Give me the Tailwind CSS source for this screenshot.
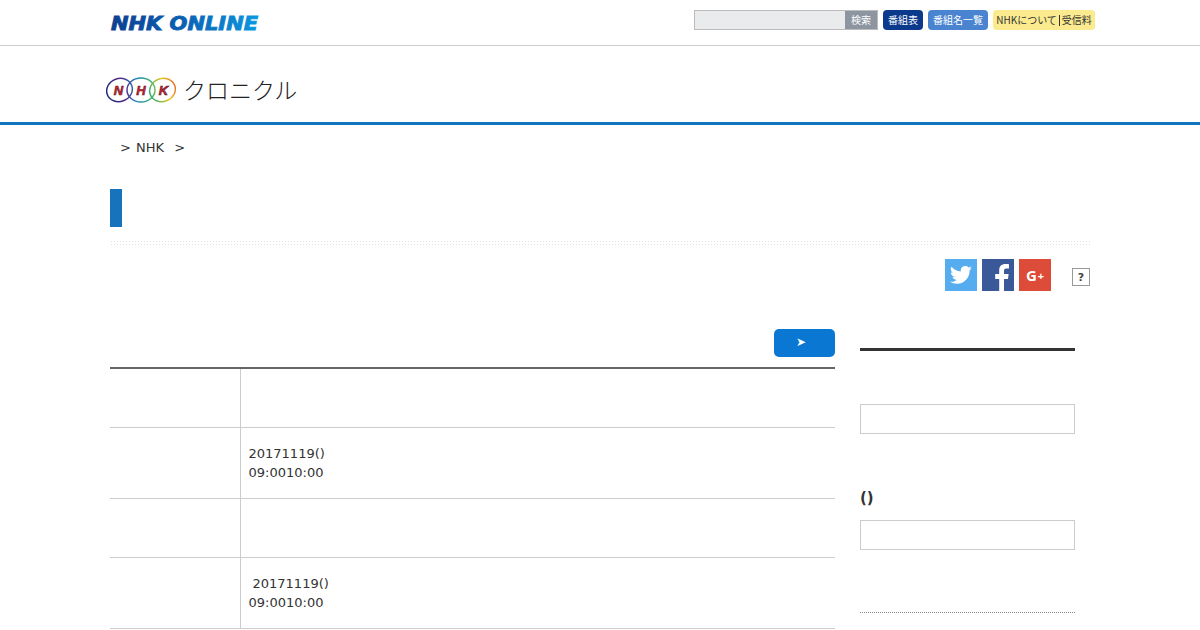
<!DOCTYPE html>
<html lang="ja">
<head>
  <meta charset="utf-8"/>
  <title>NHKクロニクル</title>
  <script src="https://cdn.jsdelivr.net/npm/@tailwindcss/browser@4"></script>
</head>
<body class="bg-white text-[#333] text-[13px] antialiased overflow-hidden h-[630px] font-['DejaVu_Sans',sans-serif]">
  <!-- top bar -->
  <header class="h-[46px] border-b border-[#ccc]">
    <div class="w-[985px] ml-[110px] h-[45px] flex items-center justify-between">
      <a class="block" href="#">
        <svg width="150" height="20" viewBox="0 0 150 20" class="block">
          <defs>
            <linearGradient id="online" x1="0" y1="0" x2="150" y2="0" gradientUnits="userSpaceOnUse">
              <stop offset="0" stop-color="#0b3f91"/>
              <stop offset="0.5" stop-color="#0b62b4"/>
              <stop offset="1" stop-color="#0a9ae0"/>
            </linearGradient>
          </defs>
          <text x="1" y="17" textLength="147" lengthAdjust="spacingAndGlyphs" font-family="DejaVu Sans" font-size="19" font-weight="700" font-style="italic" fill="url(#online)" stroke="url(#online)" stroke-width="0.9">NHK ONLINE</text>
        </svg>
      </a>
      <div class="flex items-center font-['Noto_Sans_CJK_JP',sans-serif] text-[10px] mt-[-5px]">
        <div class="flex w-[184px] h-[20px] border border-[#bbb] bg-[#e9ebed]">
          <div class="flex-1"></div>
          <div class="w-[32px] bg-[#8c95a0] text-white leading-[18px] text-center">検索</div>
        </div>
        <a class="ml-[5px] w-[40px] h-[20px] rounded-[4px] bg-[#0b3a8c] text-white leading-[20px] text-center" href="#">番組表</a>
        <a class="ml-[5px] w-[60px] h-[20px] rounded-[4px] bg-[#4a84d0] text-white leading-[20px] text-center" href="#">番組名一覧</a>
        <a class="ml-[5px] w-[102px] h-[20px] rounded-[4px] bg-[#fbeb8e] text-[#333] leading-[20px] flex items-center justify-center whitespace-nowrap" href="#">NHKについて<span class="w-px h-[11px] mx-[2px] bg-[#333]"></span>受信料</a>
      </div>
    </div>
  </header>

  <!-- chronicle logo -->
  <div class="h-[79px] border-b-[3px] border-[#0f75bd]">
    <div class="ml-[106px] h-[76px] pt-[12px] flex items-center gap-[7px]">
      <svg width="70" height="28" viewBox="0 0 70 28">
        <defs>
          <linearGradient id="ring" x1="0" y1="0" x2="70" y2="0" gradientUnits="userSpaceOnUse">
            <stop offset="0" stop-color="#1c2a78"/>
            <stop offset="0.28" stop-color="#5a2b8a"/>
            <stop offset="0.42" stop-color="#1a7fc0"/>
            <stop offset="0.62" stop-color="#2fae70"/>
            <stop offset="0.85" stop-color="#e9c81c"/>
            <stop offset="1" stop-color="#e8762a"/>
          </linearGradient>
        </defs>
        <g fill="none" stroke="url(#ring)" stroke-width="1.5">
          <ellipse cx="13.500" cy="14" rx="13" ry="11.500" transform="rotate(-20 13.500 14)"/>
          <ellipse cx="35" cy="14" rx="14" ry="12"/>
          <ellipse cx="56.500" cy="14" rx="13" ry="11.500" transform="rotate(-20 56.500 14)"/>
        </g>
        <g text-anchor="middle" font-family="Liberation Sans" font-size="13" font-weight="700" font-style="italic" fill="#d8252f" stroke="#5a1a28" stroke-width="0.6">
          <text x="12.500" y="18.500">N</text>
          <text x="35" y="18.500">H</text>
          <text x="57.500" y="18.500">K</text>
        </g>
      </svg>
      <span class="text-[23px] leading-none mt-[-2px] text-[#222] font-light font-['Noto_Sans_CJK_JP',sans-serif]">クロニクル</span>
    </div>
  </div>

  <!-- breadcrumb -->
  <div class="ml-[120px] mt-[13px] h-[19px] leading-[19px] whitespace-pre">&gt; <span class="pl-[1px]">NHK</span>  <span class="pl-[2px]">&gt;</span></div>

  <!-- page title -->
  <div class="ml-[110px] mt-[32px] w-[980px]">
    <div class="w-[12px] h-[38px] bg-[#1673bc]"></div>
    <div class="mt-[13px] h-[6px] bg-[radial-gradient(#e2e2e2_0.8px,transparent_0.8px)] bg-[length:3px_3px]"></div>
  </div>

  <!-- share -->
  <div class="w-[980px] ml-[110px] mt-[13px] h-[32px] flex items-center justify-end">
    <a class="w-[32px] h-[32px] bg-[#55acee] flex items-center justify-center" href="#">
      <svg width="24" height="24" viewBox="0 0 24 24" fill="#fff"><path d="M23 5.100c-.8.4-1.700.6-2.600.7.9-.6 1.600-1.400 2-2.500-.9.5-1.800.9-2.900 1.100C18.700 3.500 17.500 3 16.200 3c-2.500 0-4.500 2-4.500 4.500 0 .4 0 .7.100 1C7.900 8.300 4.600 6.500 2.400 3.800c-.4.700-.6 1.400-.6 2.300 0 1.600.8 2.900 2 3.700-.7 0-1.400-.2-2-.6v.1c0 2.200 1.600 4 3.600 4.400-.4.100-.8.200-1.200.2-.3 0-.6 0-.8-.1.600 1.800 2.200 3.100 4.200 3.100-1.500 1.200-3.500 1.900-5.600 1.900-.4 0-.7 0-1.100-.1 2 1.300 4.400 2 6.900 2 8.300 0 12.800-6.900 12.800-12.800v-.6c.9-.6 1.700-1.400 2.300-2.300z"/></svg>
    </a>
    <a class="ml-[5px] w-[32px] h-[32px] bg-[#3b5998] block overflow-hidden" href="#">
      <svg width="32" height="32" viewBox="0 0 32 32" fill="#fff" class="block"><path d="M22 32V20h4l.6-5H22v-3c0-1.400.4-2.400 2.400-2.400H27V5.200C26.500 5.100 25 5 23.300 5c-3.600 0-6.100 2.200-6.100 6.200V15h-4v5h4v12z"/></svg>
    </a>
    <a class="ml-[5px] w-[32px] h-[32px] bg-[#dd4b39] flex items-center justify-center text-white font-bold font-['Open_Sans',sans-serif]" href="#"><span class="text-[15px] leading-none">G</span><span class="text-[11px] leading-none ml-[1px]">+</span></a>
    <div class="ml-[21px] mt-[4px] w-[18px] h-[18px] border border-[#999] flex items-center justify-center text-[11px] font-bold text-[#444] leading-none">?</div>
  </div>

  <!-- main content -->
  <div class="ml-[110px] mt-[38px] flex gap-[25px] items-start">
    <main class="w-[725px]">
      <div class="flex justify-end">
        <a class="w-[61px] h-[28px] rounded-[5px] bg-[#0a78d2] text-white text-[12px] leading-[26px] pl-[22px]" href="#">➤</a>
      </div>
      <table class="w-full mt-[10px] border-t-2 border-[#666] border-collapse leading-[19px]">
        <tbody>
          <tr class="border-b border-[#ccc] h-[59px]">
            <th class="w-[130px] border-r border-[#ccc]"></th>
            <td class="px-[8px]"></td>
          </tr>
          <tr class="border-b border-[#ccc] h-[71px]">
            <th class="border-r border-[#ccc]"></th>
            <td class="px-[8px]">20171119()<br/>09:0010:00</td>
          </tr>
          <tr class="border-b border-[#ccc] h-[59px]">
            <th class="border-r border-[#ccc]"></th>
            <td class="px-[8px]"></td>
          </tr>
          <tr class="border-b border-[#ccc] h-[71px]">
            <th class="border-r border-[#ccc]"></th>
            <td class="px-[8px]"><span class="pl-[4px]">20171119()</span><br/>09:0010:00</td>
          </tr>
        </tbody>
      </table>
    </main>
    <aside class="w-[215px] pt-[19px]">
      <div class="h-[3px] bg-[#333]"></div>
      <div class="mt-[53px] h-[30px] border border-[#ccc]"></div>
      <h3 class="mt-[54px] text-[15px] leading-[20px] font-bold">()</h3>
      <div class="mt-[12px] h-[30px] border border-[#ccc]"></div>
      <div class="mt-[62px] border-b border-dotted border-[#888]"></div>
    </aside>
  </div>
</body>
</html>
